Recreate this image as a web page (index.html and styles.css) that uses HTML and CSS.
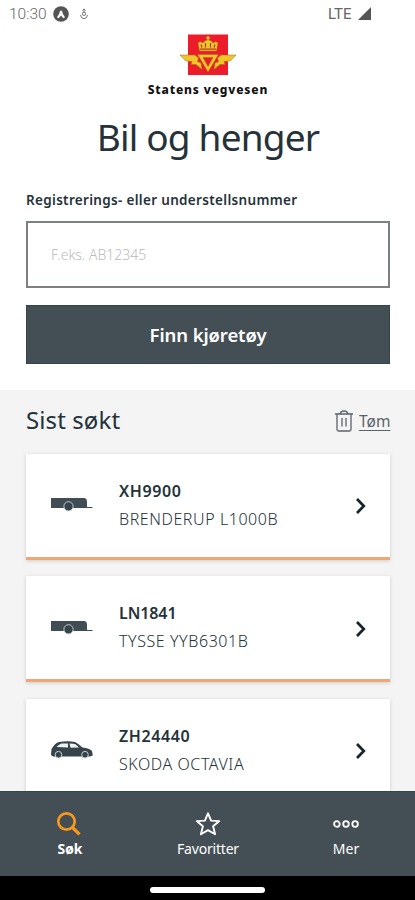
FILE: index.html
```html
<!DOCTYPE html>
<html lang="no">
<head>
<meta charset="utf-8">
<title>Bil og henger</title>
<link rel="stylesheet" href="styles.css">
</head>
<body>
<svg width="0" height="0" class="defs">
  <symbol id="trailer" viewBox="0 0 42 16">
    <path d="M0 1h33q3 0 3 4v5h5.500v1H0z" fill="#414d54"/>
    <circle cx="17.500" cy="9.300" r="4.600" fill="#35434b" stroke="#c3c9cb" stroke-width="1"/>
  </symbol>
  <symbol id="chevron" viewBox="0 0 12 18"><path d="M2 2l6.800 7L2 16" fill="none" stroke="#17242d" stroke-width="2.700"/></symbol>
</svg>
<div class="screen">
  <header class="status">
    <span class="time">10:30</span>
    <svg class="app" viewBox="0 0 16 16"><circle cx="8" cy="8" r="7.800" fill="#555"/><path d="M4 11.300q2.500-2.800 3-6.500h2q.5 3.700 3 6.500l-1.700.9L8 9.500 5.700 12.200z" fill="#fff"/></svg>
    <svg class="mic" viewBox="0 0 10 12"><g fill="none" stroke="#777" stroke-width="1"><path d="M5 .8v4M3.500 2.500L5 1l1.500 1.500"/><circle cx="5" cy="5.800" r="1.700"/><path d="M1.500 7q.5 3.700 3.500 3.700T8.500 7"/></g></svg>
    <span class="lte">LTE</span>
    <svg class="signal" viewBox="0 0 13 13"><path d="M13 0v13H0z" fill="#555"/></svg>
  </header>
  <main>
    <section class="search">
      <div class="brand">
        <svg class="logo" viewBox="0 0 56 42">
          <path d="M8 .5h40v40.500H8z" fill="#ed1c2b"/>
          <g fill="#eec62a" stroke="#a4651b" stroke-width=".5">
            <path d="M0 21h15l3.500 3-1 3.500 3.500 1.500 1 6.500-6-5h-5l1-3-6-.5z"/>
            <path d="M56 21H41l-3.500 3 1 3.500-3.500 1.500-1 6.500 6-5h5l-1-3 6-.5z"/>
            <path fill-rule="evenodd" d="M17.500 20.500h21L28 38zM23 23.500l5 9 5-9z"/>
            <path d="M19.500 17l-1.500-8q2-2.500 5 0 1.500-3 5-3t5 3q3-2.500 5 0l-1.500 8z"/>
          </g>
          <path d="M28 2v5M26 4h4" stroke="#eec62a" stroke-width="1.400"/>
          <path d="M21 10.500l1 3M25.500 9v4.500M30.500 9v4.500M35 10.500l-1 3M20 15.200h16" stroke="#b3401f" stroke-width="1.200"/>
        </svg>
        <span class="brand-name">Statens vegvesen</span>
      </div>
      <h1><span>Bil og henger</span></h1>
      <label for="reg"><span>Registrerings- eller understellsnummer</span></label>
      <div class="field" id="reg"><span>F.eks. AB12345</span></div>
      <button><span>Finn kjøretøy</span></button>
    </section>
    <section class="recent">
      <div class="recent-head">
        <h2>Sist søkt</h2>
        <svg class="trash" viewBox="0 0 18 22"><g fill="none" stroke="#59636a" stroke-width="1.300"><path d="M0 4h18M5 3.500Q6 1 9 1t4 2.500M2 4v15.500q0 1.500 1.500 1.500h11q1.500 0 1.500-1.500V4M7 8v8.500M11 8v8.500"/></g></svg>
        <a class="clear">Tøm</a>
      </div>
      <article class="card">
        <svg class="vehicle"><use href="#trailer"/></svg>
        <div class="info"><b class="wide">XH9900</b><span>BRENDERUP L1000B</span></div>
        <svg class="go"><use href="#chevron"/></svg>
      </article>
      <article class="card">
        <svg class="vehicle"><use href="#trailer"/></svg>
        <div class="info"><b>LN1841</b><span>TYSSE YYB6301B</span></div>
        <svg class="go"><use href="#chevron"/></svg>
      </article>
      <article class="card">
        <svg class="vehicle car" viewBox="0 0 42 18">
          <path d="M0 14l.5-6Q4 2 8 1q9-1.500 16 0 4 2 7.500 5.500 7 .5 9.500 3.500l.8 4.500-3 1H2z" fill="#35434b"/>
          <path d="M5.500 6q2-2.500 5-3.500h6.500v4zM18.500 2.400q4 0 6 .9l3.500 3.300-8.500.1z" fill="#eef1f1"/>
          <g fill="#35434b" stroke="#cbd1d3" stroke-width="1"><circle cx="7.500" cy="13.700" r="3.300"/><circle cx="34" cy="13.700" r="3.300"/></g>
        </svg>
        <div class="info"><b class="wide">ZH24440</b><span>SKODA OCTAVIA</span></div>
        <svg class="go"><use href="#chevron"/></svg>
      </article>
    </section>
  </main>
  <nav>
    <div class="tab active"><svg viewBox="0 0 26 26"><circle cx="10.500" cy="10.500" r="8.200" fill="none" stroke="#f7981d" stroke-width="2.700"/><path d="M16.500 16.500l7 6.800" stroke="#f7981d" stroke-width="3.200"/></svg><span>Søk</span></div>
    <div class="tab fav"><svg viewBox="0 0 26 26"><path d="M13 2.300l3.100 7.300 8.200.5-6.200 5.200 2 7.900-7.100-4.100-7.100 4.100 2-7.900-6.200-5.200 8.200-.5z" fill="none" stroke="#fff" stroke-width="1.900" stroke-linejoin="round"/></svg><span>Favoritter</span></div>
    <div class="tab more"><svg viewBox="0 0 26 26"><g fill="none" stroke="#fff" stroke-width="1.800"><circle cx="3.900" cy="13" r="2.800"/><circle cx="13" cy="13" r="2.800"/><circle cx="22.100" cy="13" r="2.800"/></g></svg><span>Mer</span></div>
  </nav>
  <footer><i class="pill"></i></footer>
</div>
</body>
</html>
```
FILE: styles.css
```css
* { box-sizing: border-box; }
body { margin: 0; background: #fff; color: #25323a; font-family: "Noto Sans", "Open Sans", sans-serif; }
.defs { position: absolute; }
.screen { width: 415px; height: 900px; display: flex; flex-direction: column; overflow: hidden; }
svg { display: block; flex: none; }
span, b, a { white-space: nowrap; }
.status { height: 28px; display: flex; align-items: center; padding-left: 9px; font: 15px/28px Roboto, sans-serif; color: #666; flex: none; }
.time { width: 44px; font-weight: 300; font-size: 15.500px; }
.app { width: 16px; height: 16px; }
.mic { width: 10px; height: 12px; margin-left: 10px; }
.lte { margin-left: 239px; width: 30px; font-size: 15px; }
.signal { width: 13px; height: 13px; margin-top: -1px; }
main { height: 763px; overflow: hidden; flex: none; }
.search { height: 362px; padding: 6px 25px 0 26px; }
.brand { display: flex; flex-direction: column; align-items: center; height: 70px; }
.logo { width: 56px; height: 42px; }
.brand-name { font: 800 12px/18px "Noto Sans", sans-serif; color: #111; letter-spacing: .85px; margin-top: 5px; }
h1 { margin: 0; height: 64px; font-size: 37px; line-height: 66px; font-weight: 400; text-align: center; letter-spacing: -.8px; }
label { display: block; height: 53px; padding-top: 22px; font-size: 13.500px; line-height: 20px; font-weight: 600; letter-spacing: .32px; }
.field { height: 67px; border: 2px solid #7b8182; padding-left: 23px; font-size: 14px; line-height: 63px; color: #bbb; font-weight: 300; }
button { display: block; width: 100%; height: 59px; margin-top: 17px; border: 1px solid #36434a; border-radius: 0; background: #444f55; color: #fff; font: 600 18.500px/56px "Noto Sans", sans-serif; letter-spacing: -.1px; padding: 0; }
.recent { background: #f4f4f4; height: 401px; padding: 0 25px 0 26px; }
.recent-head { height: 63.500px; display: flex; align-items: center; }
h2 { margin: 0; flex: 1; font-size: 24px; line-height: 60px; font-weight: 400; padding-bottom: 3px; letter-spacing: .1px; }
.trash { width: 18px; height: 22px; margin: 0 6px 2px 0; }
.clear { width: 31px; padding-bottom: 2px; font-size: 15.500px; line-height: 20px; color: #59636a; text-decoration: underline; text-underline-offset: 3px; }
.card { height: 106px; margin-bottom: 16.500px; background: #fff; border-bottom: 3px solid #eea676; display: flex; align-items: center; padding: 0 25px; box-shadow: 0 1px 4px rgba(0,0,0,.16); }
.vehicle { width: 42px; height: 16px; }
.car { height: 18px; }
.info { margin-left: 26px; flex: 1; display: flex; flex-direction: column; }
.info b { font-size: 16px; line-height: 27px; font-weight: 600; letter-spacing: -.1px; }
.info .wide { letter-spacing: .6px; }
.info span { font-size: 16px; line-height: 28px; font-weight: 300; letter-spacing: .57px; }
.go { width: 12px; height: 18px; margin: 2px -2px 0 0; }
nav { height: 85px; flex: none; background: #444f55; border-top: 1px solid #36434a; display: flex; padding-left: 1px; color: #fff; font-size: 14px; }
.tab { width: 138px; padding-top: 19px; display: flex; flex-direction: column; align-items: center; line-height: 20px; }
.tab svg { width: 26px; height: 26px; }
.active svg { margin-left: -2px; }
.tab span { margin-top: 2px; }
.fav span { letter-spacing: -.2px; }
.active { font-weight: 700; }
footer { height: 24px; background: #000; display: flex; justify-content: center; padding-top: 11px; }
.pill { width: 115px; height: 6px; border-radius: 3px; background: #fff; }
```
